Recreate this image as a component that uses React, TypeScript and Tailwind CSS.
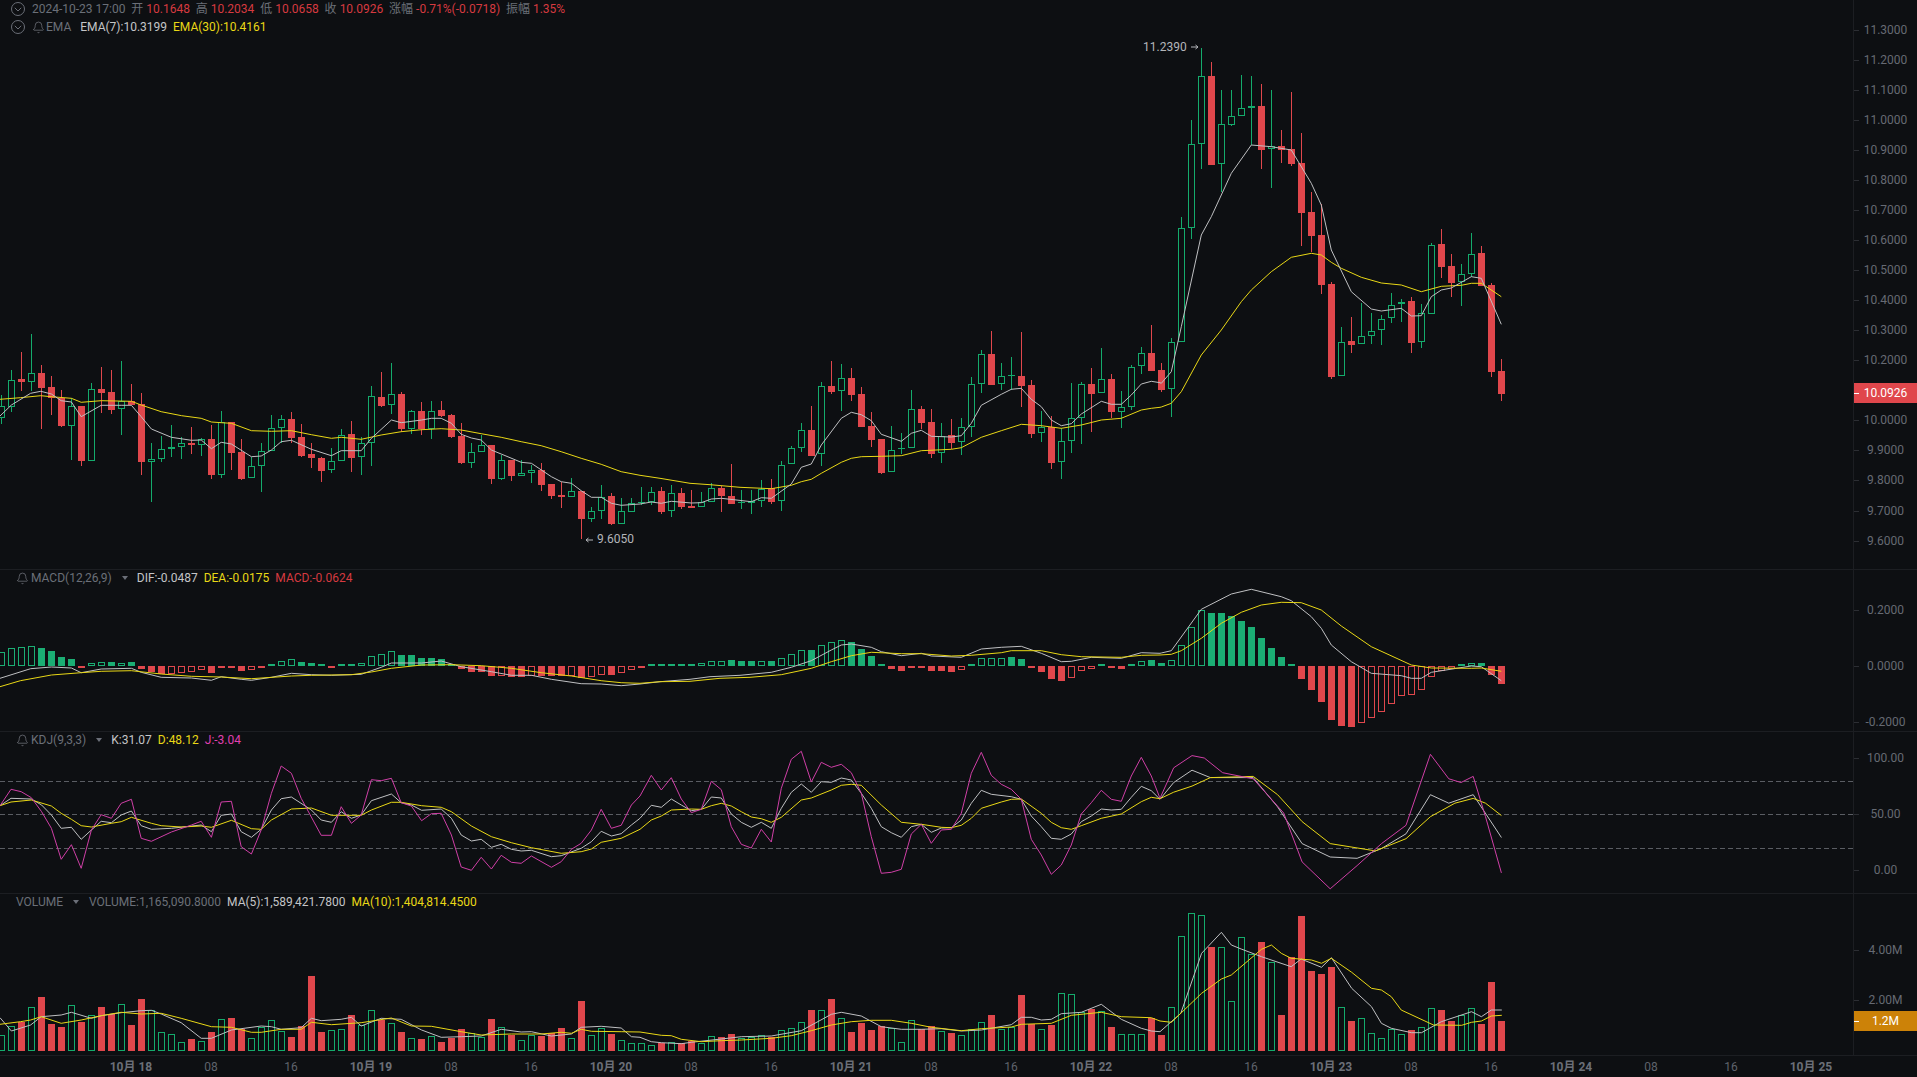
import React from "react";
import { Bell } from "lucide-react";

const GREEN = "#14ab6c";
const RED = "#e0474c";
const HGREEN = "#1bae74";
const WHITE = "#bfc0c2";
const YELLOW = "#e9d816";
const PINK = "#cf3fa6";

type C = [number, number, number, number, number];
const candA: C[] = [
  [1,228,265,195,282],[1,151,230,120,245],[0,147,155,66,182],[1,130,155,12,183],[0,129,174,105,298],[0,171,204,139,254],[0,204,288,180,292],[1,229,287,205,390],
  [0,228,392,228,408],[1,178,392,160,392],[0,177,189,110,250],[0,186,239,120,253],[1,214,238,94,314],[0,214,225,162,225],[0,222,395,190,434],[1,388,395,340,515],
  [1,358,388,318,395],[1,352,358,286,380],[1,340,352,320,388],[0,339,344,290,372],[1,328,344,325,378],[0,328,434,285,447],[1,277,434,242,445],[0,277,369,275,420],
  [0,366,446,328,449],[1,409,445,380,445],[1,364,409,340,486],[1,293,364,255,364],[1,268,293,254,340],[0,268,323,245,338],[0,322,378,283,380],[0,373,384,338,413],
  [0,385,423,380,456],[1,394,419,354,428],[1,314,394,298,394],[0,313,383,272,425],[1,338,382,322,434],[1,199,340,168,407],[0,201,228,126,230],[1,193,226,100,253],
  [0,192,297,186,305],[1,244,297,240,312],[0,243,297,217,315],[1,242,296,212,326],[0,240,258,212,262],[0,255,321,252,323],[0,318,399,278,401],[1,365,398,338,414],
  [1,346,365,316,366],[0,345,446,345,462],[1,391,446,375,450],[0,390,437,390,454],[1,430,437,390,437],[1,421,430,405,458],[0,420,465,400,482],[0,462,497,462,507],
  [0,495,500,455,533],[1,484,500,445,500],[0,484,567,484,628],[1,544,566,532,575],[1,500,544,465,566],[0,499,582,488,584],[1,544,581,505,581],[1,518,547,505,547],
];
const candB: C[] = [
  [1,515,518,472,525],[1,485,516,472,525],[0,484,545,472,552],[1,490,544,465,560],[0,490,530,475,537],[0,529,533,480,533],[1,515,532,485,532],[1,475,517,460,517],
  [0,475,497,467,547],[0,498,521,403,523],[1,517,520,480,537],[1,514,520,480,552],[1,476,514,450,530],[0,475,515,448,521],[1,404,514,393,542],[1,355,403,348,403],
  [1,301,355,278,365],[0,300,377,228,377],[1,169,373,155,407],[0,168,185,93,193],[1,145,184,102,242],[0,144,194,114,212],[0,192,290,172,290],[0,289,329,247,352],
  [0,327,429,327,432],[1,359,427,287,427],[1,355,358,310,372],[1,238,355,181,355],[0,237,278,228,298],[0,276,371,236,383],[1,318,370,278,398],[0,316,338,268,358],
  [1,292,337,264,374],[1,163,292,140,320],[1,73,163,60,190],[0,72,164,3,164],[1,139,163,100,180],[1,136,139,82,180],[0,138,167,5,230],[0,165,311,150,325],
  [1,292,310,243,335],[0,291,398,258,416],[1,334,397,295,446],[1,263,334,160,368],[1,163,264,155,343],[0,163,191,114,307],
];
const candC: C[] = [
  [1,1048,1090,955,1090],[0,1048,1145,1033,1165],[1,1130,1147,1082,1193],[1,1010,1130,1005,1140],[1,970,1009,951,1032],[0,969,1022,885,1022],[0,1020,1080,1000,1085],[1,935,1078,923,1160],
  [1,595,935,560,935],[1,343,595,270,627],[1,139,343,54,418],[0,138,404,97,404],[1,283,403,180,485],[1,257,284,180,287],[1,235,259,135,259],[1,229,235,138,346],
  [0,228,359,162,418],[1,349,358,180,474],[0,348,360,300,398],[0,357,402,187,408],[0,399,548,308,648],[0,546,617,486,665],[0,615,764,523,792],[0,762,1040,755,1048],
  [1,935,1039,892,1039],[0,933,945,861,970],[1,919,943,820,943],[1,902,919,848,941],[1,866,901,855,945],[1,824,865,790,878],[1,815,823,806,876],[0,813,938,800,968],
  [1,850,937,822,953],[1,644,851,638,853],[0,642,711,597,744],[0,708,758,672,800],[1,731,757,702,828],[1,671,731,609,740],[0,669,767,648,767],[0,765,1025,758,1041],[0,1023,1091,988,1112],
];
const conv = (a: C[], y0: number): C[] =>
  a.map(([u, bt, bb, wt, wb]) => [u, Math.round(y0 + bt / 3), Math.round(y0 + bb / 3), Math.round(y0 + wt / 3), Math.round(y0 + wb / 3)]);
const candles: C[] = [...conv(candA, 330), ...conv(candB, 330), ...conv(candC, 30)];

// MACD histogram: [value in zoom px, hollow]
const hist: [number, number][] = [
  [43,1],[53,1],[56,1],[59,1],[54,0],[45,0],[27,0],[21,0],[-5,0],[8,1],[13,1],[11,0],[10,1],[11,0],[-10,0],[-19,0],
  [-25,0],[-24,1],[-20,1],[-17,1],[-13,1],[-21,0],[-4,0],[-4,0],[-14,0],[-13,1],[-7,1],[7,1],[16,1],[20,1],[11,0],[9,0],
  [3,0],[-4,0],[7,1],[4,0],[8,1],[29,1],[35,1],[44,1],[33,0],[33,0],[24,0],[23,0],[20,0],[3,0],[-9,0],[-18,0],
  [-18,0],[-29,0],[-29,1],[-33,0],[-33,0],[-29,1],[-30,0],[-30,0],[-30,0],[-30,1],[-35,0],[-33,1],[-26,1],[-26,0],[-22,1],[-12,1],
  [-5,1],[5,0],[5,0],[6,1],[6,1],[7,0],[9,1],[16,1],[16,1],[17,0],[14,0],[14,0],[16,1],[14,0],[25,1],[37,1],
  [49,1],[47,0],[64,1],[73,1],[79,1],[71,0],[50,0],[29,0],[4,0],[-8,0],[-14,0],[-5,0],[-4,0],[-14,0],[-14,0],[-17,0],
  [-13,1],[4,0],[25,1],[25,1],[25,1],[26,0],[20,0],[-5,0],[-17,0],[-38,0],[-44,0],[-35,1],[-16,1],[-10,1],
  [4,0],[-5,0],[-8,0],[4,0],[16,1],[17,0],[8,0],[19,1],[64,1],[118,1],[169,1],[158,0],[158,0],[149,0],[135,0],[116,0],
  [84,0],[53,0],[26,0],[5,0],[-38,0],[-71,0],[-107,0],[-161,0],[-179,0],[-182,0],[-172,1],[-157,1],[-139,1],[-115,1],[-91,1],[-88,1],
  [-73,1],[-34,1],[-14,1],[-10,1],[4,0],[10,1],[8,0],[-26,0],[-53,0],
];

// Volume bar tops, zoom px below y=890
const vols: number[] = [
  435,409,395,352,322,402,411,346,396,376,351,372,341,405,327,361,427,433,457,447,454,426,388,384,418,445,410,391,424,441,408,258,
  426,421,418,375,405,361,391,400,426,445,447,439,456,445,418,430,440,387,412,435,451,436,437,430,414,445,333,436,414,432,451,460,
  460,466,458,456,460,452,458,439,441,432,445,440,436,440,421,415,397,360,361,327,385,426,399,420,408,414,455,391,418,408,424,429,
  436,418,397,375,418,410,315,403,418,405,310,313,366,357,364,411,433,433,433,384,435,352,139,70,76,171,172,334,142,192,156,215,
  375,202,78,243,252,231,352,393,385,430,445,418,433,420,412,355,360,393,376,355,402,276,393,
];

type Seg = { d: number[]; sx: number; x0: number; y0: number; sy?: number };
const poly = (segs: Seg[]): string => {
  const out: string[] = [];
  let last = -1e9;
  for (const s of segs) {
    for (let i = 0; i < s.d.length; i += 2) {
      const x = s.x0 + s.d[i] / s.sx;
      const y = s.y0 + s.d[i + 1] / (s.sy ?? 3);
      if (x > last + 0.1) {
        out.push(`${x.toFixed(1)},${y.toFixed(1)}`);
        last = x;
      }
    }
  }
  return out.join(" ");
};

const ema30 = poly([
  { d: [0,208,50,203,100,197,125,200,175,205,199,217,248,212,322,214,346,225,395,245,445,257,493,265,518,276,542,278,567,280,616,302,665,304,714,302,763,314,812,325,836,322,885,328,934,315,983,305,1033,299,1081,296,1130,300,1179,311,1228,322,1277,335,1326,347,1375,365,1424,385,1473,403,1522,425,1568,436], sx: 2.45, x0: 0, y0: 330 },
  { d: [0,435,60,445,150,460,210,464,300,472,394,476,454,466,484,455,514,448,544,430,604,397,634,385,664,380,724,379,784,377,844,362,934,358,964,353,1024,322,1084,302,1144,283,1204,287,1264,295,1324,285,1384,270,1444,265,1504,240,1534,235,1560,232], sx: 3, x0: 640, y0: 330 },
  { d: [0,1170,64,1165,94,1157,154,1135,184,1131,214,1120,244,1085,304,975,364,900,424,815,454,780,514,725,574,682,634,670,664,675,694,697,724,715,784,742,844,759,904,765,964,785,1024,769,1084,766,1114,760,1144,760,1204,800], sx: 3, x0: 1100, y0: 30 },
]);
const ema7 = poly([
  { d: [0,258,28,225,75,190,100,184,126,192,150,212,175,216,199,260,248,226,297,226,322,226,346,260,371,297,420,322,469,331,493,330,518,356,542,337,567,342,616,380,640,378,665,360,689,335,714,331,763,358,812,377,836,362,885,362,910,325,959,270,983,278,1033,270,1057,265,1081,265,1106,280,1130,313,1155,324,1179,330,1204,360,1228,372,1277,397,1302,400,1351,440,1375,455,1400,460,1424,482,1449,502,1473,502,1498,520,1522,526,1568,522], sx: 2.45, x0: 0, y0: 330 },
  { d: [0,523,34,516,64,520,94,514,154,519,184,518,214,507,244,505,334,515,364,503,394,505,454,462,484,412,514,402,544,345,604,265,634,247,664,254,694,272,724,313,784,334,814,310,844,301,874,319,934,321,964,317,994,280,1024,226,1084,193,1114,178,1144,175,1174,208,1204,230,1234,270,1264,287,1294,281,1324,252,1384,214,1414,223,1444,223,1474,195,1504,162,1534,154,1560,158], sx: 3, x0: 640, y0: 330 },
  { d: [0,1112,34,1122,64,1123,124,1062,154,1053,184,1060,214,1025,244,890,304,615,334,560,394,430,454,345,514,350,574,360,634,460,664,525,694,660,754,785,814,837,844,843,904,835,934,858,964,857,994,800,1024,780,1054,774,1114,740,1144,745,1204,883], sx: 3, x0: 1100, y0: 30 },
]);
const dif = poly([
  { d: [0,355,75,326,126,321,175,324,199,338,248,327,322,325,346,337,395,352,469,354,518,361,542,350,591,358,616,361,665,352,714,340,763,344,812,346,885,343,934,322,959,309,1033,309,1081,303,1130,320,1204,335,1253,346,1302,346,1351,358,1424,371,1473,372,1522,377,1568,372], sx: 2.45, x0: 0, y0: 560 },
  { d: [0,370,60,365,150,358,210,350,300,346,394,337,454,322,514,302,574,270,604,255,634,252,694,262,724,275,784,287,844,280,874,288,964,292,1024,267,1084,262,1144,259,1204,280,1264,305,1294,304,1354,292,1444,295,1504,278,1560,280], sx: 3, x0: 640, y0: 560 },
  { d: [0,290,64,294,124,277,184,279,214,272,304,148,394,102,454,88,544,110,574,122,634,170,664,205,694,255,754,305,814,340,904,347,934,355,964,355,994,337,1114,318,1144,320,1204,362], sx: 3, x0: 1100, y0: 560 },
]);
const dea = poly([
  { d: [0,380,50,362,126,345,199,338,248,334,322,332,395,342,469,349,542,351,616,356,714,348,763,346,861,344,910,336,959,325,1033,315,1106,314,1179,317,1253,325,1326,338,1400,348,1473,362,1522,368,1568,370], sx: 2.45, x0: 0, y0: 560 },
  { d: [0,368,60,365,150,364,240,355,330,352,424,344,514,325,574,305,634,287,694,277,784,281,844,281,934,288,994,286,1084,278,1114,272,1204,272,1264,284,1324,290,1444,292,1504,286,1560,285], sx: 3, x0: 640, y0: 560 },
  { d: [0,289,64,292,124,285,214,283,244,272,304,235,364,190,424,157,484,135,544,127,604,128,664,150,724,198,814,260,934,315,994,324,1114,325,1144,324,1204,334], sx: 3, x0: 1100, y0: 560 },
]);
const J = poly([
  { d: [0,227,27,178,52,185,77,203,102,245,126,295,150,388,175,344,199,415,224,300,248,254,273,265,297,220,322,208,346,325,371,334,420,306,469,285,493,274,518,322,542,216,567,214,591,350,616,372,640,300,665,190,689,108,714,130,738,205,787,316,812,316,836,230,861,280,885,255,910,149,934,152,959,145,983,218,1008,228,1033,272,1057,251,1081,250,1106,315,1130,411,1155,421,1179,382,1204,417,1228,376,1253,397,1277,400,1302,378,1351,412,1375,395,1400,358,1424,340,1449,300,1473,238,1498,295,1522,286,1547,225,1568,198], sx: 2.45, x0: 0, y0: 730 },
  { d: [0,708,34,646,64,690,94,653,124,717,154,758,184,748,214,664,244,689,274,800,304,853,334,864,364,808,394,846,424,685,454,598,484,574,514,666,544,607,574,622,604,613,634,638,664,700,694,830,724,940,754,937,784,928,814,822,844,793,874,850,904,810,934,808,964,760,994,640,1024,577,1054,646,1084,673,1114,688,1144,718,1174,838,1204,885,1234,943,1264,915,1294,855,1324,762,1354,728,1384,691,1414,718,1444,724,1474,648,1504,592,1534,648,1560,715], sx: 3, x0: 640, y0: 560 },
  { d: [960,628,975,618,985,620,1000,632,1025,637,1050,665,1065,705,1088,727,1110,708,1130,690,1150,675,1170,617,1185,637,1195,640,1205,635,1215,668,1228,714], sx: 1 / 1.2226, x0: 0, y0: 0, sy: 1 / 1.2226 },
]);
const K = poly([
  { d: [0,227,27,205,77,207,102,225,126,255,150,295,175,292,199,328,224,300,248,274,273,278,297,255,322,243,346,287,371,298,420,295,493,285,518,305,542,256,567,252,591,305,616,322,640,298,665,240,689,206,714,201,763,240,787,270,812,277,836,245,861,265,885,255,910,212,959,192,983,218,1008,225,1033,241,1081,237,1106,265,1130,315,1155,333,1179,328,1204,352,1228,343,1253,358,1277,363,1302,361,1351,380,1375,377,1424,355,1449,335,1473,304,1498,318,1522,311,1547,285,1568,265], sx: 2.45, x0: 0, y0: 730 },
  { d: [0,775,34,736,64,742,94,717,124,735,154,752,184,748,214,711,244,714,274,762,304,787,334,802,364,787,394,805,424,745,454,697,484,672,514,697,544,665,574,667,604,654,634,660,664,700,694,745,724,800,754,818,784,832,814,800,844,793,874,817,904,804,934,803,964,780,994,730,1024,691,1054,703,1114,710,1144,718,1174,768,1204,800,1234,835,1264,838,1294,822,1324,785,1354,768,1384,747,1414,750,1444,748,1474,712,1504,679,1534,692,1560,718], sx: 3, x0: 640, y0: 560 },
  { d: [960,640,975,630,990,636,1025,636,1045,660,1065,690,1088,701,1110,702,1130,694,1150,682,1170,650,1185,657,1205,650,1228,685], sx: 1 / 1.2226, x0: 0, y0: 0, sy: 1 / 1.2226 },
]);
const D = poly([
  { d: [0,227,27,216,77,210,126,228,150,250,175,268,199,287,224,291,273,280,297,275,322,262,371,280,395,287,444,291,493,288,518,292,567,271,616,296,640,298,665,270,714,237,763,234,812,256,885,256,910,240,959,217,983,217,1033,227,1081,232,1106,245,1155,288,1204,320,1253,338,1302,353,1375,370,1424,365,1449,357,1473,337,1522,325,1568,298], sx: 2.45, x0: 0, y0: 730 },
  { d: [0,808,34,780,64,768,94,750,154,747,184,748,214,737,244,730,274,738,304,755,334,771,364,776,394,787,424,772,484,720,514,714,574,690,604,676,634,673,664,676,724,735,784,787,844,793,904,802,934,803,964,796,994,775,1024,745,1084,726,1114,718,1144,717,1204,760,1234,787,1264,803,1294,808,1324,797,1384,775,1444,762,1504,725,1534,712,1560,716], sx: 3, x0: 640, y0: 560 },
  { d: [960,648,975,643,990,636,1025,635,1045,650,1065,672,1088,690,1125,696,1150,686,1170,668,1190,657,1205,653,1215,657,1228,667], sx: 1 / 1.2226, x0: 0, y0: 0, sy: 1 / 1.2226 },
]);
const ma5 = poly([
  { d: [0,383,28,423,75,405,101,380,150,375,175,367,224,385,248,377,297,368,346,362,371,361,395,372,444,398,493,445,518,445,567,420,640,408,665,410,689,418,738,413,763,385,787,392,836,388,861,382,885,408,934,385,983,388,1033,420,1081,442,1130,440,1179,438,1228,418,1277,426,1302,425,1351,438,1400,432,1424,412,1473,409,1522,414,1547,440,1568,442], sx: 2.45, x0: 0, y0: 890 },
  { d: [0,440,34,455,64,458,124,461,154,457,244,447,304,440,394,438,484,422,574,373,604,367,664,378,724,410,784,418,844,418,904,416,964,423,1024,420,1114,404,1144,382,1174,382,1204,390,1234,388,1264,371,1324,367,1384,343,1444,388,1504,415,1534,423,1560,425], sx: 3, x0: 640, y0: 890 },
  { d: [155,370,195,190,233,127,252,165,271,177,310,200,367,230,386,207,425,232,444,203,483,295,521,350,540,400,559,415,598,428,617,428,655,395,713,365,732,380,751,360,771,360], sx: 1.919, x0: 1100, y0: 890 },
]);
const ma10 = poly([
  { d: [0,403,50,395,75,390,101,380,150,400,199,390,248,377,297,367,346,372,395,370,444,385,518,410,567,412,616,427,640,427,689,418,738,418,763,397,812,404,885,398,959,384,1008,408,1057,409,1130,425,1179,435,1253,432,1326,432,1375,427,1400,430,1424,418,1449,424,1522,425,1568,426], sx: 2.45, x0: 0, y0: 890 },
  { d: [0,427,64,436,94,437,124,448,184,455,244,452,304,450,394,445,454,437,514,422,574,405,634,395,694,391,754,391,814,400,874,412,964,422,1024,416,1114,411,1144,403,1234,400,1294,376,1384,367,1444,380,1534,383,1560,393], sx: 3, x0: 640, y0: 890 },
  { d: [137,397,195,310,233,267,252,255,310,178,329,165,348,190,367,205,406,210,425,220,444,205,483,247,521,295,540,300,559,320,578,360,640,405,694,406,713,397,732,393,751,378,771,376], sx: 1.919, x0: 1100, y0: 890 },
]);

const Line = ({ p, c }: { p: string; c: string }) => <polyline points={p} fill="none" stroke={c} strokeWidth={1} strokeLinejoin="round" />;

const Circle = () => (
  <svg width="14" height="14" viewBox="0 0 14 14" fill="none" stroke="#6b6f78" strokeWidth="1" className="shrink-0">
    <circle cx="7" cy="7" r="6.5" />
    <path d="M3.8 5.8 7 9 10.2 5.8" />
  </svg>
);
const BellI = () => <Bell size={13} strokeWidth={1.2} className="shrink-0 text-[#80848d]" />;
const Caret = () => <span className="shrink-0 w-0 h-0 border-l-[3.5px] border-r-[3.5px] border-t-[4px] border-l-transparent border-r-transparent border-t-[#6b6f78]" />;

const Tick = () => <span className="absolute left-0 top-1/2 w-[5px] h-px bg-[#2c2e33]" />;
const AxisRow = ({ label, h }: { label: string; h: string }) => (
  <div className={`relative shrink-0 flex items-center justify-center ${h}`}>
    <Tick />
    <span>{label}</span>
  </div>
);

const prices = ["11.3000","11.2000","11.1000","11.0000","10.9000","10.8000","10.7000","10.6000","10.5000","10.4000","10.3000","10.2000","","10.0000","9.9000","9.8000","9.7000","9.6000"];
const times = ["10月 18","08","16","10月 19","08","16","10月 20","08","16","10月 21","08","16","10月 22","08","16","10月 23","08","16","10月 24","08","16","10月 25"];

const Group = ({ a, b }: { a: string; b: string }) => (
  <span className="flex gap-[3px]">
    <span className="text-[#6b6f78]">{a}</span>
    <span className="text-[#d63a40]">{b}</span>
  </span>
);

export default function App() {
  return (
    <div className="w-[1917px] h-[1077px] overflow-hidden bg-[#0d0f12] text-[12px] leading-[16px] text-[#666a73] font-['Roboto','Noto_Sans_CJK_SC',sans-serif]">
      {/* Price panel */}
      <div className="flex h-[570px] border-b border-[#1c1e22]">
        <div className="relative w-[1854px] border-r border-[#1c1e22]">
          <svg className="absolute left-0 top-0 w-[1853px] h-[569px]" viewBox="0 0 1853 569">
            {candles.map(([u, bt, bb, wt, wb], k) => {
              const c = u ? GREEN : RED;
              const x = 10 * k + 1.5;
              const h = Math.max(bb - bt, 1);
              return (
                <g key={k} shapeRendering="crispEdges">
                  <line x1={x} x2={x} y1={wt} y2={bt} stroke={c} />
                  <line x1={x} x2={x} y1={bt + h} y2={Math.max(wb, bt + h)} stroke={c} />
                  {u ? (
                    h < 2 ? (
                      <rect x={x - 3.5} y={bt} width={7} height={1} fill={c} />
                    ) : (
                      <rect x={x - 3} y={bt + 0.5} width={6} height={h - 1} fill="#0d0f12" stroke={c} />
                    )
                  ) : (
                    <rect x={x - 3.5} y={bt} width={7} height={h} fill={c} />
                  )}
                </g>
              );
            })}
            <Line p={ema30} c={YELLOW} />
            <Line p={ema7} c={WHITE} />
            <path d="M1191 47H1198M1195.5 45 1198 47 1195.5 49" stroke="#b4b6ba" fill="none" />
            <path d="M586 540H593M588.500 538 586 540 588.500 542" stroke="#b4b6ba" fill="none" />
          </svg>
          <div className="absolute left-0 top-0 flex flex-col pl-[11px]">
            <div className="flex items-center h-[18px]">
              <Circle />
              <div className="flex gap-[5.8px] ml-[7px]">
                <span className="text-[#6b6f78]">2024-10-23 17:00</span>
                <Group a="开" b="10.1648" />
                <Group a="高" b="10.2034" />
                <Group a="低" b="10.0658" />
                <Group a="收" b="10.0926" />
                <Group a="涨幅" b="-0.71%(-0.0718)" />
                <Group a="振幅" b="1.35%" />
              </div>
            </div>
            <div className="flex items-center h-[18px]">
              <Circle />
              <span className="ml-[7px]"><BellI /></span>
              <span className="ml-[1px] text-[#6b6f78]">EMA</span>
              <span className="ml-[9px] text-[#c4c5c7]">EMA(7):10.3199</span>
              <span className="ml-[6px] text-[#e9d816]">EMA(30):10.4161</span>
            </div>
          </div>
          <span className="absolute left-[1143px] top-[39px] text-[#b4b6ba]">11.2390</span>
          <span className="absolute left-[597px] top-[531px] text-[#b4b6ba]">9.6050</span>
        </div>
        <div className="relative flex-1 flex flex-col pt-[15px]">
          {prices.map((p, i) => (
            <AxisRow key={i} label={p} h="h-[30.04px]" />
          ))}
          <div className="absolute left-0 top-[383px] w-full h-[20px] bg-[#e0474c] flex items-center justify-center text-white">
            <span className="absolute left-0 top-1/2 w-[5px] h-px bg-white" />
            10.0926
          </div>
        </div>
      </div>

      {/* MACD */}
      <div className="flex h-[162px] border-b border-[#1c1e22]">
        <div className="relative w-[1854px] border-r border-[#1c1e22]">
          <svg className="absolute left-0 top-0 w-[1853px] h-[161px]" viewBox="0 570 1853 161">
            {hist.map(([v, hollow], k) => {
              const x = 10 * k + 1.5;
              const up = v > 0;
              const c = up ? HGREEN : RED;
              const h = Math.max(Math.round(Math.abs(v) / 3), 2);
              const y = up ? 666 - h : 666;
              return hollow ? (
                <rect key={k} shapeRendering="crispEdges" x={x - 3} y={y + 0.5} width={6} height={h - 1} fill="none" stroke={c} />
              ) : (
                <rect key={k} shapeRendering="crispEdges" x={x - 3.5} y={y} width={7} height={h} fill={c} />
              );
            })}
            <Line p={dif} c={WHITE} />
            <Line p={dea} c={YELLOW} />
          </svg>
          <div className="absolute left-[16px] top-0 h-[16px] flex items-center">
            <BellI />
            <span className="ml-[2px] text-[#6b6f78]">MACD(12,26,9)</span>
            <span className="ml-[10px] flex"><Caret /></span>
            <span className="ml-[9px] text-[#c4c5c7]">DIF:-0.0487</span>
            <span className="ml-[6px] text-[#e9d816]">DEA:-0.0175</span>
            <span className="ml-[6px] text-[#d63a40]">MACD:-0.0624</span>
          </div>
        </div>
        <div className="flex-1 flex flex-col pt-[12px]">
          <AxisRow label="0.2000" h="h-[56px]" />
          <AxisRow label="0.0000" h="h-[56px]" />
          <AxisRow label="-0.2000" h="h-[56px]" />
        </div>
      </div>

      {/* KDJ */}
      <div className="flex h-[162px] border-b border-[#1c1e22]">
        <div className="relative w-[1854px] border-r border-[#1c1e22]">
          <svg className="absolute left-0 top-0 w-[1853px] h-[161px]" viewBox="0 732 1853 161">
            {[781.5, 814.5, 848.5].map((y) => (
              <line key={y} x1={0} x2={1853} y1={y} y2={y} stroke="#5a5d63" strokeDasharray="5 3" />
            ))}
            <Line p={K} c={WHITE} />
            <Line p={D} c={YELLOW} />
            <Line p={J} c={PINK} />
          </svg>
          <div className="absolute left-[16px] top-0 h-[16px] flex items-center">
            <BellI />
            <span className="ml-[2px] text-[#6b6f78]">KDJ(9,3,3)</span>
            <span className="ml-[10px] flex"><Caret /></span>
            <span className="ml-[9px] text-[#c4c5c7]">K:31.07</span>
            <span className="ml-[6px] text-[#e9d816]">D:48.12</span>
            <span className="ml-[6px] text-[#e040b0]">J:-3.04</span>
          </div>
        </div>
        <div className="flex-1 flex flex-col overflow-hidden">
          <div className="-mt-[2px] flex flex-col">
            <AxisRow label="100.00" h="h-[56px]" />
            <AxisRow label="50.00" h="h-[56px]" />
            <AxisRow label="0.00" h="h-[56px]" />
          </div>
        </div>
      </div>

      {/* Volume */}
      <div className="flex h-[162px] border-b border-[#1c1e22]">
        <div className="relative w-[1854px] border-r border-[#1c1e22]">
          <svg className="absolute left-0 top-0 w-[1853px] h-[161px]" viewBox="0 894 1853 161">
            {vols.map((t, k) => {
              const x = 10 * k + 1.5;
              const up = candles[k][0];
              const y = Math.round(890 + t / 3);
              return up ? (
                <rect key={k} shapeRendering="crispEdges" x={x - 3} y={y + 0.5} width={6} height={1051 - y - 1} fill="none" stroke={GREEN} />
              ) : (
                <rect key={k} shapeRendering="crispEdges" x={x - 3.5} y={y} width={7} height={1051 - y} fill={RED} />
              );
            })}
            <Line p={ma5} c={WHITE} />
            <Line p={ma10} c={YELLOW} />
          </svg>
          <div className="absolute left-[16px] top-0 h-[16px] flex items-center">
            <span className="text-[#6b6f78]">VOLUME</span>
            <span className="ml-[10px] flex"><Caret /></span>
            <span className="ml-[10px] text-[#6b6f78]">VOLUME:1,165,090.8000</span>
            <span className="ml-[6px] text-[#c4c5c7]">MA(5):1,589,421.7800</span>
            <span className="ml-[6px] text-[#e9d816]">MA(10):1,404,814.4500</span>
          </div>
        </div>
        <div className="relative flex-1 flex flex-col pt-[31px]">
          <AxisRow label="4.00M" h="h-[50px]" />
          <AxisRow label="2.00M" h="h-[50px]" />
          <div className="absolute left-0 top-[117px] w-full h-[20px] bg-[#cc8208] flex items-center justify-center text-white">
            <span className="absolute left-0 top-1/2 w-[5px] h-px bg-white" />
            1.2M
          </div>
        </div>
      </div>

      {/* Time axis */}
      <div className="flex h-[21px] items-center pl-[91px]">
        {times.map((t, i) => (
          <span key={i} className={`w-[80px] shrink-0 text-center ${t.includes("月") ? "font-bold text-[#6b6f78]" : "text-[#5f636c]"}`}>
            {t}
          </span>
        ))}
      </div>
    </div>
  );
}
